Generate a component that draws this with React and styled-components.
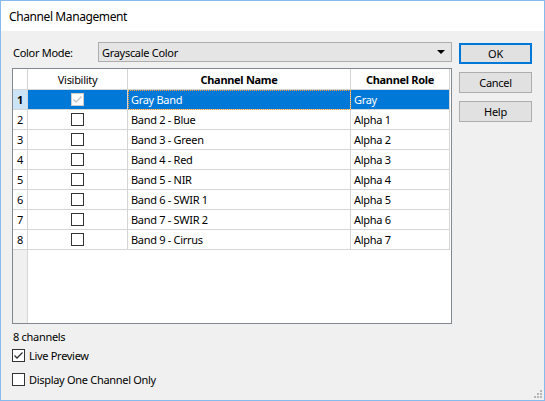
import React from 'react'
import styled, { createGlobalStyle } from 'styled-components'

const Global = createGlobalStyle`
  html, body {
    margin: 0;
    padding: 0;
    background: #f0f0f0;
  }
  * {
    box-sizing: border-box;
  }
`

const font = `'Noto Sans', 'Open Sans', sans-serif`

const Window = styled.div`
  position: relative;
  width: 545px;
  height: 401px;
  border: 1px solid #86bbee;
  background: #f0f0f0;
  font-family: ${font};
  font-size: 11px;
  letter-spacing: -0.3px;
  color: #000;
  display: flex;
  flex-direction: column;
`

const TitleBar = styled.div`
  height: 30px;
  background: #fff;
  display: flex;
  align-items: center;
  padding-left: 8px;
  font-size: 12px;
  letter-spacing: -0.4px;
  flex-shrink: 0;
`

const Body = styled.div`
  flex: 1;
  display: flex;
  gap: 7px;
  padding: 11px 11px 0 11px;
`

const Main = styled.div`
  width: 440px;
  display: flex;
  flex-direction: column;
`

const ModeRow = styled.div`
  display: flex;
  align-items: center;
  height: 20px;
`

const Label = styled.div`
  width: 86px;
  padding-left: 1px;
`

const Combo = styled.div`
  flex: 1;
  height: 20px;
  border: 1px solid #adadad;
  background: #e5e5e5;
  display: flex;
  align-items: center;
  justify-content: space-between;
  padding: 0 6px 0 3px;
`

const Arrow = styled.div`
  width: 0;
  height: 0;
  border-left: 4px solid transparent;
  border-right: 4px solid transparent;
  border-top: 4px solid #000;
`

const Grid = styled.div`
  margin-top: 6px;
  height: 256px;
  border: 1px solid #828790;
  background: #fff;
  display: grid;
  grid-template-columns: 15px 100px 223px 99px;
  grid-template-rows: 21px repeat(8, 20px) 1fr;
`

const Filler = styled.div`
  grid-column: 1;
  background: #f0f0f0;
  border-right: 1px solid #d5d5d5;
`

const Cell = styled.div`
  border-right: 1px solid #d5d5d5;
  border-bottom: 1px solid #d5d5d5;
  display: flex;
  align-items: center;
  justify-content: ${p => (p.center ? 'center' : 'flex-start')};
  padding-left: ${p => (p.center ? 0 : 3)}px;
  background: ${p => (p.selected ? '#0078d7' : '#fff')};
  color: ${p => (p.selected ? '#fff' : '#000')};
  font-weight: ${p => (p.bold ? 700 : 400)};
  white-space: nowrap;
  overflow: hidden;
  &:last-child {
    border-right: none;
  }
`

const HeadCell = styled(Cell)`
  justify-content: center;
  padding-left: 0;
`

const RowHead = styled(Cell)`
  padding-left: 4px;
  background: ${p => (p.selected ? '#cce4f7' : '#fff')};
  color: #000;
  font-weight: ${p => (p.selected ? 700 : 400)};
`

const FocusCell = styled(Cell)`
  outline: 1px dotted #ff9a2e;
  outline-offset: -1px;
`

const Box = styled.div`
  width: 13px;
  height: 13px;
  border: 1px solid ${p => (p.disabled ? '#cccccc' : '#333')};
  background: ${p => (p.disabled ? '#fcfcfc' : '#fff')};
  display: flex;
  align-items: center;
  justify-content: center;
  flex-shrink: 0;
`

const Footer = styled.div`
  display: flex;
  flex-direction: column;
  padding-top: 2px;
`

const Count = styled.div`
  height: 20px;
  display: flex;
  align-items: center;
  padding-left: 1px;
`

const CheckRow = styled.label`
  display: flex;
  align-items: center;
  gap: 4px;
  height: 13px;
  margin-top: ${p => p.gap}px;
`

const Buttons = styled.div`
  display: flex;
  flex-direction: column;
  gap: 8px;
  padding-top: 1px;
`

const Button = styled.div`
  width: 73px;
  height: 21px;
  background: #e1e1e1;
  border: ${p => (p.primary ? '2px solid #0078d7' : '1px solid #adadad')};
  display: flex;
  align-items: center;
  justify-content: center;
`

const Grip = styled.svg`
  position: absolute;
  right: 2px;
  bottom: 2px;
`

const Check = ({ color }) => (
  <svg width="11" height="11" viewBox="0 0 11 11">
    <path d="M1.5 5.5 L4 8 L9.5 2.5" fill="none" stroke={color} strokeWidth="1.3" />
  </svg>
)

const CheckBox = ({ checked, disabled }) => (
  <Box disabled={disabled}>{checked && <Check color={disabled ? '#c4c4c4' : '#333'} />}</Box>
)

const channels = [
  ['Gray Band', 'Gray'],
  ['Band 2 - Blue', 'Alpha 1'],
  ['Band 3 - Green', 'Alpha 2'],
  ['Band 4 - Red', 'Alpha 3'],
  ['Band 5 - NIR', 'Alpha 4'],
  ['Band 6 - SWIR 1', 'Alpha 5'],
  ['Band 7 - SWIR 2', 'Alpha 6'],
  ['Band 9 - Cirrus', 'Alpha 7'],
]

export default function App() {
  return (
    <>
      <Global />
      <Window>
        <TitleBar>Channel Management</TitleBar>
        <Body>
          <Main>
            <ModeRow>
              <Label>Color Mode:</Label>
              <Combo>
                <span>Grayscale Color</span>
                <Arrow />
              </Combo>
            </ModeRow>
            <Grid>
              <HeadCell />
              <HeadCell>Visibility</HeadCell>
              <HeadCell bold>Channel Name</HeadCell>
              <HeadCell bold>Channel Role</HeadCell>
              {channels.map(([name, role], i) => {
                const sel = i === 0
                const NameCell = sel ? FocusCell : Cell
                return (
                  <React.Fragment key={name}>
                    <RowHead selected={sel}>{i + 1}</RowHead>
                    <Cell center selected={sel}>
                      <CheckBox checked={sel} disabled={sel} />
                    </Cell>
                    <NameCell selected={sel}>{name}</NameCell>
                    <Cell selected={sel}>{role}</Cell>
                  </React.Fragment>
                )
              })}
              <Filler />
            </Grid>
            <Footer>
              <Count>8 channels</Count>
              <CheckRow gap={3}>
                <CheckBox checked />
                Live Preview
              </CheckRow>
              <CheckRow gap={11}>
                <CheckBox />
                Display One Channel Only
              </CheckRow>
            </Footer>
          </Main>
          <Buttons>
            <Button primary>OK</Button>
            <Button>Cancel</Button>
            <Button>Help</Button>
          </Buttons>
        </Body>
        <Grip width="10" height="10" viewBox="0 0 10 10">
          {[
            [8, 0], [8, 3], [5, 3], [8, 6], [5, 6], [2, 6],
          ].map(([x, y]) => (
            <rect key={`${x}-${y}`} x={x} y={y + 2} width="2" height="2" fill="#b5b5b5" />
          ))}
        </Grip>
      </Window>
    </>
  )
}
